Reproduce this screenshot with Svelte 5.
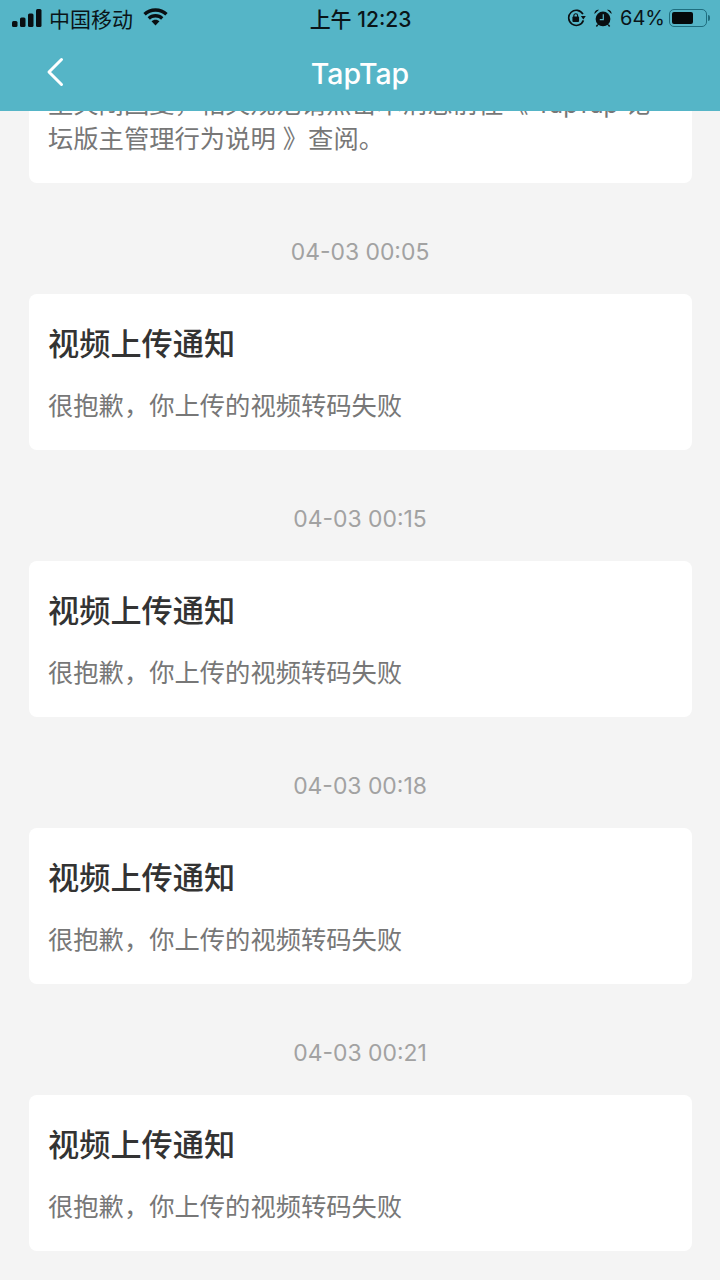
<script>
	const notices = [
		{ time: '04-03 00:05' },
		{ time: '04-03 00:15' },
		{ time: '04-03 00:18' },
		{ time: '04-03 00:21' }
	];
</script>

<div class="page">
	<header class="top">
		<div class="status">
			<div class="status-left">
				<svg class="signal" width="30" height="18" viewBox="0 0 30 18">
					<rect x="0" y="12" width="5.500" height="6" rx="1.500" />
					<rect x="8" y="8.500" width="5.500" height="9.500" rx="1.500" />
					<rect x="16" y="4.500" width="5.500" height="13.500" rx="1.500" />
					<rect x="24" y="0" width="5.500" height="18" rx="1.500" />
				</svg>
				<span>中国移动</span>
				<svg class="wifi" width="25" height="18" viewBox="0 0 27 19">
					<path d="M13.500 0C8.400 0 3.800 2 .4 5.200l2.500 2.700C5.600 5.300 9.400 3.700 13.500 3.700s7.900 1.600 10.600 4.200l2.500-2.700C23.200 2 18.600 0 13.500 0z" />
					<path d="M13.500 6.300c-3.300 0-6.300 1.300-8.500 3.400l2.500 2.700c1.500-1.500 3.700-2.400 6-2.400s4.500.9 6 2.400l2.500-2.700c-2.200-2.100-5.200-3.400-8.500-3.400z" />
					<path d="M13.500 12.500c-1.700 0-3.200.7-4.300 1.700l4.300 4.600 4.300-4.600c-1.100-1-2.600-1.700-4.300-1.700z" />
				</svg>
			</div>
			<div class="status-time">上午 12:23</div>
			<div class="status-right">
				<svg class="lock" width="19" height="18" viewBox="0 0 20 19">
					<path d="M16.800 5.500A8 8 0 1 0 17.300 12" fill="none" stroke="#0a0f12" stroke-width="1.700" />
					<path d="M14.600 7.500h5.200L17.200 11z" />
					<rect x="5.700" y="8" width="7" height="5.600" rx="1" />
					<path d="M7.200 8.500V7a2 2 0 0 1 4 0v1.500" fill="none" stroke="#0a0f12" stroke-width="1.200" />
				</svg>
				<svg class="alarm" width="18" height="18" viewBox="0 0 18 19">
					<circle cx="9" cy="10.500" r="7.800" />
					<path d="M0 5.200A4 4 0 0 1 4.800.8zM18 5.200A4 4 0 0 0 13.200.8z" />
					<path d="M3.500 16.500l-1.500 2M14.500 16.500l1.500 2" stroke="#0a0f12" stroke-width="1.600" />
					<path d="M9.300 5.500v5.600H5.600" fill="none" stroke="#55b5c7" stroke-width="1.300" />
				</svg>
				<span>64%</span>
				<div class="battery">
					<div class="battery-body"><div class="battery-fill"></div></div>
					<div class="battery-cap"></div>
				</div>
			</div>
		</div>
		<div class="nav">
			<svg class="back" width="20" height="30" viewBox="0 0 20 30">
				<path d="M16.500 2.500L4 15l12.500 12.500" fill="none" stroke="#fff" stroke-width="3" stroke-linecap="round" stroke-linejoin="round" />
			</svg>
			<div class="nav-title">TapTap</div>
		</div>
	</header>

	<main class="list">
		<section class="card first">
			<p class="desc long">主关闭回复，相关规范请点击本消息前往《 <span class="latin">TapTap</span> 论<br />坛版主管理行为说明 》查阅。</p>
		</section>
		{#each notices as notice}
			<div class="time">{notice.time}</div>
			<section class="card">
				<h2 class="title">视频上传通知</h2>
				<p class="desc">很抱歉，你上传的视频转码失败</p>
			</section>
		{/each}
	</main>
</div>

<style>
	:global(body) {
		margin: 0;
		background: #f4f4f4;
	}
	.page {
		position: relative;
		height: 1280px;
		overflow: hidden;
		background: #f4f4f4;
		font-family: "Inter", "Noto Sans CJK SC", sans-serif;
	}
	.top {
		position: absolute;
		top: 0;
		left: 0;
		right: 0;
		height: 111px;
		background: #55b5c7;
		z-index: 2;
	}
	.status {
		display: grid;
		grid-template-columns: 1fr auto 1fr;
		align-items: center;
		height: 36px;
		padding: 0 10px 0 12px;
		color: #0a1418;
		font-size: 21px;
	}
	.status-left {
		display: flex;
		align-items: center;
		gap: 7px;
	}
	.status-left .wifi {
		margin-left: 3px;
		margin-top: -2px;
	}
	.status-left svg,
	.status-right svg {
		fill: #0a0f12;
		flex: none;
	}
	.status-time {
		font-size: 21px;
		font-weight: 500;
		padding-right: 1px;
	}
	.status-right {
		display: flex;
		align-items: center;
		justify-content: flex-end;
		gap: 8px;
		font-size: 20px;
	}
	.battery {
		display: flex;
		align-items: center;
		gap: 1px;
		margin-left: -4px;
	}
	.battery-body {
		width: 38px;
		height: 18px;
		padding: 2px;
		box-sizing: border-box;
		border: 1.500px solid #1f6e7f;
		border-radius: 5px;
	}
	.battery-fill {
		width: 21px;
		height: 100%;
		background: #05090b;
		border-radius: 2px;
	}
	.battery-cap {
		width: 2px;
		height: 6px;
		background: #1f6e7f;
		border-radius: 0 2px 2px 0;
	}
	.nav {
		position: relative;
		display: flex;
		justify-content: center;
		align-items: center;
		height: 74px;
	}
	.back {
		position: absolute;
		left: 45px;
		top: 21px;
	}
	.nav-title {
		color: #fff;
		font-size: 28.500px;
		font-weight: 500;
		margin-top: 1px;
	}
	.list {
		display: flex;
		flex-direction: column;
		padding: 0 28px 0 29px;
	}
	.card {
		background: #fff;
		border-radius: 8px;
		padding: 29px 19px 0;
		height: 156.500px;
		box-sizing: border-box;
	}
	.card.first {
		height: 183px;
		padding-top: 87px;
		border-radius: 0 0 8px 8px;
	}
	.time {
		height: 110.500px;
		line-height: 138px;
		text-align: center;
		padding-right: 1px;
		color: #a2a2a2;
		font-size: 22.900px;
	}
	.title {
		margin: 0;
		color: #333;
		font-size: 31.200px;
		font-weight: 500;
		line-height: 42px;
	}
	.desc {
		margin: 24px 0 0;
		color: #777;
		font-size: 25.300px;
		line-height: 34px;
	}
	.desc.long {
		margin: 0;
		white-space: nowrap;
	}
	.latin {
		font-size: 24.200px;
	}
</style>
